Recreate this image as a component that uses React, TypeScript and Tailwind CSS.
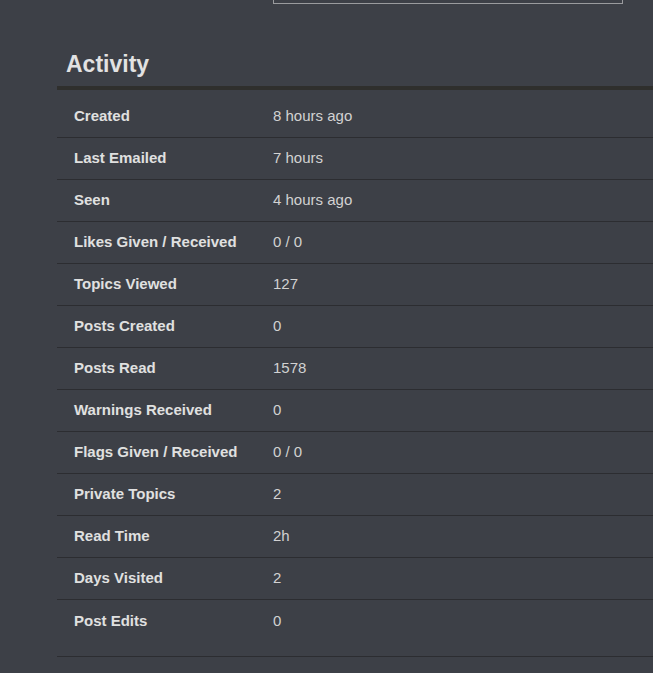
import React from "react";

const rows: [string, string][] = [
  ["Created", "8 hours ago"],
  ["Last Emailed", "7 hours"],
  ["Seen", "4 hours ago"],
  ["Likes Given / Received", "0 / 0"],
  ["Topics Viewed", "127"],
  ["Posts Created", "0"],
  ["Posts Read", "1578"],
  ["Warnings Received", "0"],
  ["Flags Given / Received", "0 / 0"],
  ["Private Topics", "2"],
  ["Read Time", "2h"],
  ["Days Visited", "2"],
  ["Post Edits", "0"],
];

export default function App() {
  return (
    <div
      className="w-[653px] h-[673px] overflow-hidden bg-[#3d4047]"
      style={{ fontFamily: '"Liberation Sans", Arial, sans-serif' }}
    >
      <div className="ml-[273px] w-[350px] h-[4px] border-x border-b border-[#9a9b9e]" />
      <div className="ml-[57px] mt-[46px]">
        <h2 className="pl-[9px] text-[23px] leading-[28px] font-bold text-[#e2e2e2]">
          Activity
        </h2>
        <div className="mt-[8px] h-[4px] bg-[#2f2f2d]" />
        <div className="pt-[6px] pb-[14px] border-b border-[#2c2d31]">
          {rows.map(([k, v], i) => (
            <div
              key={k}
              className={
                "flex items-center h-[42px] " +
                (i < rows.length - 1 ? "border-b border-[#2c2d31]" : "")
              }
            >
              <div className="w-[216px] pl-[17px] text-[15px] font-bold text-[#e0e0e0]">
                {k}
              </div>
              <div className="text-[15px] text-[#d2d2d2]">{v}</div>
            </div>
          ))}
        </div>
      </div>
    </div>
  );
}
